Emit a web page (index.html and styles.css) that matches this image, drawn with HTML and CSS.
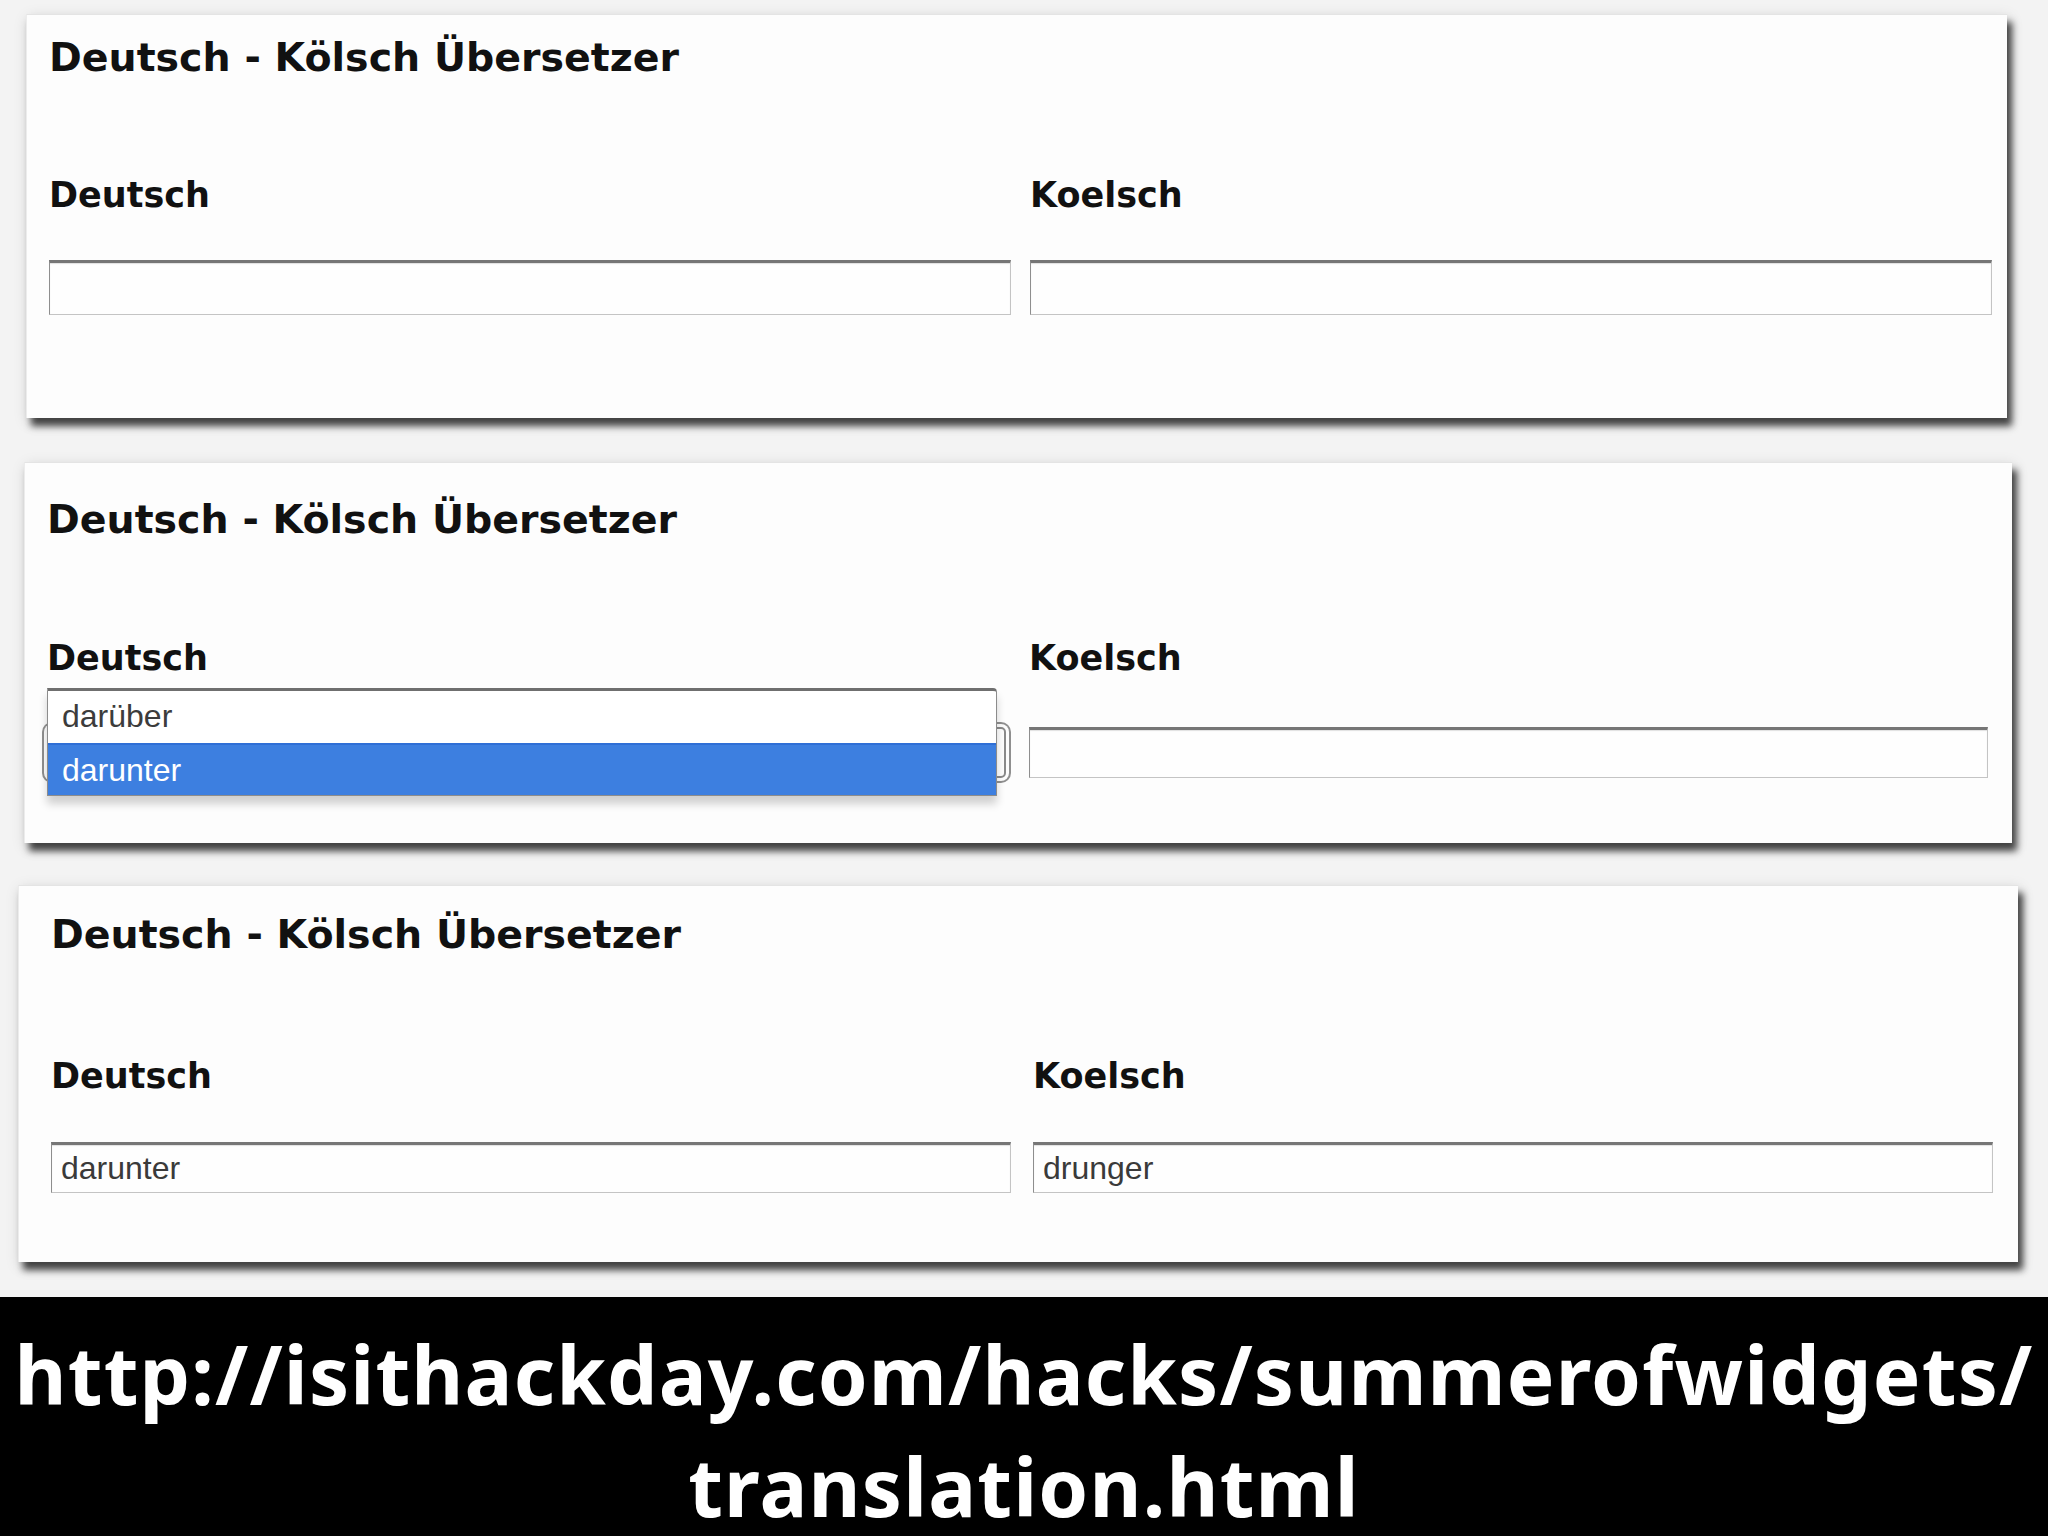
FILE: index.html
```html
<!DOCTYPE html>
<html lang="de">
<head>
<meta charset="utf-8">
<title>Deutsch - Kölsch Übersetzer</title>
<link rel="stylesheet" href="styles.css">
</head>
<body>
<main class="page">
  <section class="panel panel--a">
    <h2 class="panel__title">Deutsch - Kölsch Übersetzer</h2>
    <div class="fields fields--a">
      <div class="field">
        <label class="field__label">Deutsch</label>
        <input class="field__input field__input--tall" type="text" value="">
      </div>
      <div class="field">
        <label class="field__label">Koelsch</label>
        <input class="field__input field__input--tall" type="text" value="">
      </div>
    </div>
  </section>

  <section class="panel panel--b">
    <h2 class="panel__title">Deutsch - Kölsch Übersetzer</h2>
    <div class="fields fields--b">
      <div class="field">
        <label class="field__label">Deutsch</label>
        <div class="field__box">
          <input class="field__input field__input--focus" type="text" value="">
          <ul class="suggest">
            <li class="suggest__item">darüber</li>
            <li class="suggest__item suggest__item--active">darunter</li>
          </ul>
        </div>
      </div>
      <div class="field">
        <label class="field__label">Koelsch</label>
        <div class="field__box">
          <input class="field__input" type="text" value="">
        </div>
      </div>
    </div>
  </section>

  <section class="panel panel--c">
    <h2 class="panel__title">Deutsch - Kölsch Übersetzer</h2>
    <div class="fields fields--c">
      <div class="field">
        <label class="field__label">Deutsch</label>
        <input class="field__input" type="text" value="darunter">
      </div>
      <div class="field">
        <label class="field__label">Koelsch</label>
        <input class="field__input" type="text" value="drunger">
      </div>
    </div>
  </section>

  <footer class="caption">
    <p class="caption__text">http://isithackday.com/hacks/summerofwidgets/<br>translation.html</p>
  </footer>
</main>
</body>
</html>
```

FILE: styles.css
```css
* {
  box-sizing: border-box;
}

html, body {
  margin: 0;
  padding: 0;
}

body {
  width: 2048px;
  height: 1536px;
  overflow: hidden;
  background: #f3f3f3;
  font-family: "DejaVu Sans", "Liberation Sans", sans-serif;
  color: #111;
}

.page {
  display: flex;
  flex-direction: column;
  height: 100%;
}

/* translator widget card */
.panel {
  background: #fdfdfd;
  border-top: 1px solid #e4e4e4;
  border-left: 1px solid #ececec;
  box-shadow: 5px 8px 7px rgba(0, 0, 0, 0.7), 2px 4px 14px rgba(0, 0, 0, 0.15);
}

.panel--a {
  margin: 14px 0 0 26px;
  width: 1981px;
  padding: 23px 15px 103px 22px;
}

.panel--b {
  margin: 44px 0 0 24px;
  width: 1988px;
  padding: 37px 24px 65px 22px;
}

.panel--c {
  margin: 42px 0 0 18px;
  width: 2000px;
  padding: 29px 25px 69px 32px;
}

.panel__title {
  margin: 0;
  font-size: 39.5px;
  line-height: 39px;
  font-weight: bold;
  color: #111;
  white-space: nowrap;
}

.panel--a .panel__title { margin-bottom: 101px; }
.panel--b .panel__title { margin-bottom: 102px; }
.panel--c .panel__title { margin-bottom: 105px; }

.fields {
  display: grid;
  grid-template-columns: 1fr 1fr;
}

.fields--a { column-gap: 19px; }
.fields--b { column-gap: 23px; }
.fields--c { column-gap: 22px; }

.field {
  display: flex;
  flex-direction: column;
}

.field__label {
  display: block;
  font-size: 35px;
  line-height: 35px;
  font-weight: bold;
  color: #111;
}

.fields--a .field__label { margin-bottom: 47px; }
.fields--b .field__label { margin-bottom: 51px; }
.fields--c .field__label { margin-bottom: 48px; }

.field__box {
  position: relative;
}

.field__input {
  display: block;
  width: 100%;
  height: 51px;
  margin: 0;
  padding: 0 9px;
  background: #fefefe;
  border: 1px solid #c4c4c4;
  border-left-color: #8e8e8e;
  border-top: 3px solid #767676;
  border-radius: 0;
  box-shadow: inset 0 1px 1px rgba(0, 0, 0, 0.12);
  font-family: "Liberation Sans", Arial, sans-serif;
  font-size: 32px;
  color: #3a3a3a;
  outline: none;
}

.field__input--tall {
  height: 55px;
}

/* focused field: rounded ring around the box */
.field__input--focus {
  border: 2px solid #8a8a8a;
  border-radius: 5px;
  box-shadow: 0 0 0 3px #fdfdfd, 0 0 0 5px #8f8f8f;
}

/* autocomplete popup over the focused field */
.suggest {
  position: absolute;
  top: -39px;
  left: 0;
  width: 950px;
  margin: 0;
  padding: 0;
  list-style: none;
  background: #fff;
  border: 1px solid #8c8c8c;
  border-top: 3px solid #6f6f6f;
  border-radius: 0 4px 0 0;
  box-shadow: 0 8px 8px rgba(0, 0, 0, 0.18);
}

.suggest__item {
  height: 52px;
  padding: 0 14px;
  font-family: "Liberation Sans", Arial, sans-serif;
  font-size: 32px;
  line-height: 50px;
  color: #3c3c3c;
}

.suggest__item--active {
  background: #3d7fe0;
  color: #fff;
  border-top: 2px solid #2f6fd6;
}

/* black caption strip with the link */
.caption {
  margin-top: 35px;
  flex: 1;
  background: #000;
  color: #fff;
}

.caption__text {
  margin: 0;
  padding-top: 21px;
  text-align: center;
  white-space: nowrap;
  font-family: "Noto Sans", "Open Sans", sans-serif;
  font-weight: bold;
  font-size: 80px;
  line-height: 112px;
  letter-spacing: 1.2px;
}
```
